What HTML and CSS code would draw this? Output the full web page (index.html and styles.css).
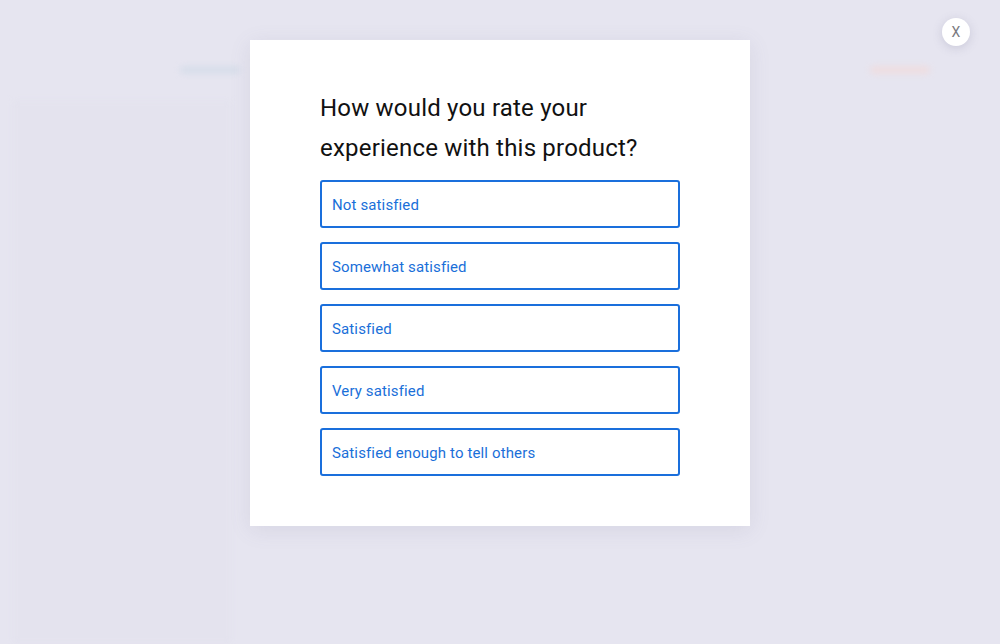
FILE: index.html
```html
<!DOCTYPE html>
<html lang="en">
<head>
<meta charset="utf-8">
<title>Rate your experience</title>
<link rel="stylesheet" href="styles.css">
</head>
<body>
<div class="backdrop">
  <div class="bg-page">
    <div class="bg-head">
      <span class="bg-bar bg-blue"></span>
      <span class="bg-bar bg-pink"></span>
    </div>
    <div class="bg-side"></div>
  </div>
</div>
<button class="close" type="button">X</button>
<div class="stage">
  <div class="modal">
    <h1 class="question">How would you rate your experience with this product?</h1>
    <div class="options">
      <button class="option" type="button">Not satisfied</button>
      <button class="option" type="button">Somewhat satisfied</button>
      <button class="option" type="button">Satisfied</button>
      <button class="option" type="button">Very satisfied</button>
      <button class="option" type="button">Satisfied enough to tell others</button>
    </div>
  </div>
</div>
</body>
</html>
```
FILE: styles.css
```css
html, body {
  margin: 0;
  padding: 0;
  height: 100%;
}
body {
  background: #e6e5f0;
  font-family: Roboto, "Liberation Sans", sans-serif;
  overflow: hidden;
  position: relative;
}
.backdrop {
  position: absolute;
  inset: 0;
  filter: blur(3px);
  opacity: 0.6;
}
.bg-page {
  height: 100%;
  display: flex;
  flex-direction: column;
}
.bg-head {
  height: 60px;
  padding-top: 4px;
  display: flex;
  justify-content: space-between;
  padding-left: 180px;
  padding-right: 70px;
  box-sizing: border-box;
}
.bg-bar {
  width: 60px;
  height: 8px;
  border-radius: 4px;
  margin-top: 62px;
}
.bg-blue { background: #cdd9e6; }
.bg-pink { background: #f4d8d6; }
.bg-side {
  flex: 1;
  margin: 40px 0 0 12px;
  width: 220px;
  background: #e3e2ed;
}
.close {
  position: absolute;
  top: 18px;
  left: 942px;
  width: 28px;
  height: 28px;
  border-radius: 50%;
  border: none;
  background: #ffffff;
  color: #7a7a80;
  font-family: Roboto, "Liberation Sans", sans-serif;
  font-size: 14px;
  padding: 0;
  line-height: 28px;
  text-align: center;
  box-shadow: 0 2px 10px rgba(120, 118, 150, 0.25);
}
.stage {
  position: relative;
  display: flex;
  justify-content: center;
  padding-top: 40px;
}
.modal {
  width: 500px;
  box-sizing: border-box;
  background: #ffffff;
  padding: 48px 70px 50px;
  box-shadow: 0 4px 20px rgba(110, 108, 140, 0.12);
}
.question {
  margin: 0 0 12px;
  font-size: 24px;
  font-weight: 400;
  line-height: 40px;
  letter-spacing: 0.2px;
  color: #111111;
}
.options {
  display: flex;
  flex-direction: column;
  gap: 14px;
}
.option {
  height: 48px;
  box-sizing: border-box;
  border: 2px solid #1a6fdc;
  border-radius: 3px;
  background: #ffffff;
  color: #1a6fd9;
  font-family: Roboto, "Liberation Sans", sans-serif;
  font-size: 15px;
  letter-spacing: 0.13px;
  text-align: left;
  padding: 2px 10px 0;
  cursor: pointer;
}
```
